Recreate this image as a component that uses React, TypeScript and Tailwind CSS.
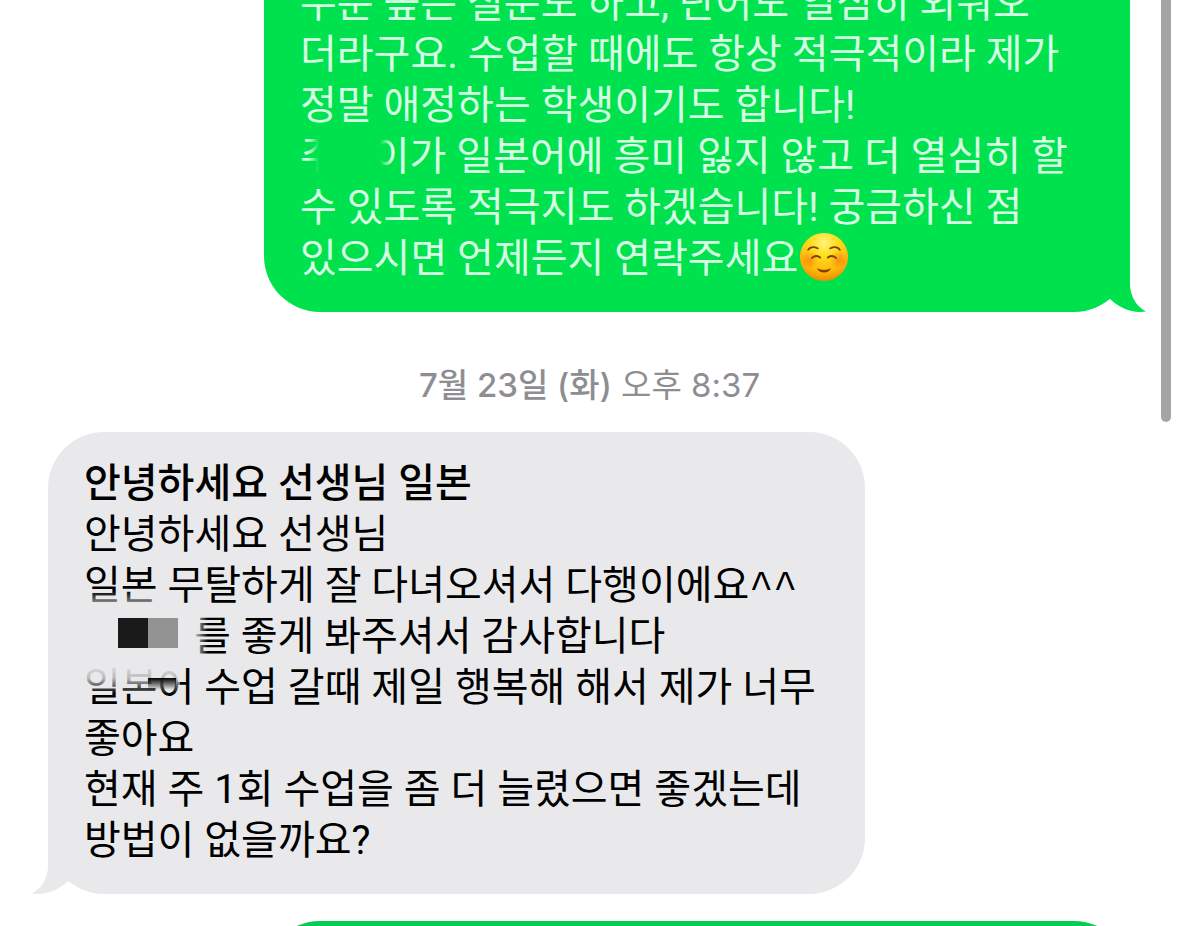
import type { ReactNode } from 'react';
import clsx from 'clsx';

interface BubbleProps {
  side: 'sent' | 'received';
  className?: string;
  children: ReactNode;
}

function Tail({ side }: { side: 'sent' | 'received' }) {
  return (
    <svg
      viewBox="0 0 56 80"
      aria-hidden="true"
      className={clsx(
        'absolute bottom-0 h-20 w-14',
        side === 'sent' ? '-right-4 text-[#00e14e]' : '-left-4 -scale-x-100 text-[#e9e9eb]'
      )}
    >
      <path d="M40 0V54C41 65 46 74 56 79.500C42 81.500 30 76 21 68L0 40Z" fill="currentColor" />
    </svg>
  );
}

function Bubble({ side, className, children }: BubbleProps) {
  return (
    <div
      className={clsx(
        "relative px-9 font-['Roboto','Noto_Sans_CJK_KR',sans-serif] text-[40px] leading-[51px]",
        side === 'sent' ? 'self-end bg-[#00e14e] text-[#d6ffe4]' : 'self-start bg-[#e9e9eb] text-black',
        className
      )}
    >
      {children}
      <Tail side={side} />
    </div>
  );
}

function Line({ children }: { children: ReactNode }) {
  return <p className="relative whitespace-nowrap">{children}</p>;
}

function SmileEmoji() {
  return (
    <svg viewBox="0 0 48 48" role="img" aria-label="smiling face" className="ml-0.5 inline-block size-12 align-top">
      <defs>
        <radialGradient id="face" cx="0.5" cy="0.2" r="0.8">
          <stop offset="0" stopColor="#fff27a" />
          <stop offset="0.35" stopColor="#ffdd1c" />
          <stop offset="0.75" stopColor="#ffb80a" />
          <stop offset="1" stopColor="#e88d08" />
        </radialGradient>
        <radialGradient id="cheek">
          <stop offset="0" stopColor="#ff7a12" stopOpacity="0.75" />
          <stop offset="1" stopColor="#ff8a12" stopOpacity="0" />
        </radialGradient>
      </defs>
      <circle cx="24" cy="24" r="24" fill="url(#face)" />
      <circle cx="9" cy="27" r="10" fill="url(#cheek)" />
      <circle cx="39" cy="27" r="10" fill="url(#cheek)" />
      <g fill="none" stroke="#7a4305" strokeLinecap="round" strokeWidth="1.6">
        <path d="M8 17C10 14 14 13.500 18 15.500" />
        <path d="M40 17C38 14 34 13.500 30 15.500" />
        <path d="M12 25C14 22.500 18 22.500 20 24.500" strokeWidth="2" />
        <path d="M36 25C34 22.500 30 22.500 28 24.500" strokeWidth="2" />
      </g>
      <path d="M17 35C21 37.500 27 37.500 31 35C29 41 19 41 17 35Z" fill="#7a4305" />
    </svg>
  );
}

export default function App() {
  return (
    <main
      lang="ko"
      className="relative flex h-screen flex-col overflow-hidden bg-white px-12 font-['Inter','Noto_Sans_CJK_KR',sans-serif]"
    >
      <Bubble side="sent" className="-mt-[22px] mr-px w-[866px] shrink-0 rounded-b-[56px] pb-7">
        <Line>수준 높은 질문도 하고, 단어도 열심히 외워오</Line>
        <Line>더라구요. 수업할 때에도 항상 적극적이라 제가</Line>
        <Line>정말 애정하는 학생이기도 합니다!</Line>
        <Line>
          주<span className="inline-block w-9" />이가 일본어에 흥미 잃지 않고 더 열심히 할
          <span className="absolute top-0 left-2 h-full w-[72px] bg-linear-to-r from-transparent via-[#00e14e] via-15% to-[#00e14e]" />
          <span className="absolute top-0 left-20 h-full w-3 bg-linear-to-r from-[#00e14e] to-transparent" />
        </Line>
        <Line>수 있도록 적극지도 하겠습니다! 궁금하신 점</Line>
        <Line>
          있으시면 언제든지 연락주세요
          <SmileEmoji />
        </Line>
      </Bubble>

      <time className="shrink-0 pt-12 pb-[22px] text-center text-[33px] leading-[50px] text-[#8e8e92]">
        <span className="font-medium">7월 23일 (화)</span> 오후 8:37
      </time>

      <Bubble side="received" className="w-[817px] shrink-0 rounded-[56px] pt-[26px] pb-7">
        <h1 className="font-medium">안녕하세요 선생님 일본</h1>
        <Line>안녕하세요 선생님</Line>
        <Line>
          일본 무탈하게 잘 다녀오셔서 다행이에요<span className="font-['Liberation_Mono'] leading-none">^^</span>
          <span className="absolute bottom-0 left-0 h-5 w-20 bg-linear-to-b from-transparent to-[#e9e9eb]" />
        </Line>
        <Line>
          <span className="mr-4 ml-[34px] inline-flex h-11 items-center align-top">
            <span className="size-[30px] bg-[#1a1a1a]" />
            <span className="size-[30px] bg-[#939393]" />
          </span>
          를 좋게 봐주셔서 감사합니다
          <span className="absolute top-0 left-24 h-full w-7 bg-linear-to-r from-[#e9e9eb] via-[#e9e9eb]/90 to-transparent" />
        </Line>
        <Line>
          일본어 수업 갈때 제일 행복해 해서 제가 너무
          <span className="absolute top-0 left-0 h-8 w-24 bg-linear-to-b from-[#e9e9eb] via-[#e9e9eb]/80 to-transparent" />
          <span className="absolute top-4 left-16 h-3 w-7 bg-linear-to-b from-black to-transparent" />
        </Line>
        <Line>좋아요</Line>
        <Line>현재 주 1회 수업을 좀 더 늘렸으면 좋겠는데</Line>
        <Line>방법이 없을까요?</Line>
      </Bubble>

      <div className="mt-[27px] mr-px h-32 w-[866px] shrink-0 self-end rounded-t-[56px] bg-[#06cb54]" />

      <div className="absolute top-0 right-2 h-[422px] w-[10px] rounded-b-full bg-[#a5a5a5]" />
    </main>
  );
}
